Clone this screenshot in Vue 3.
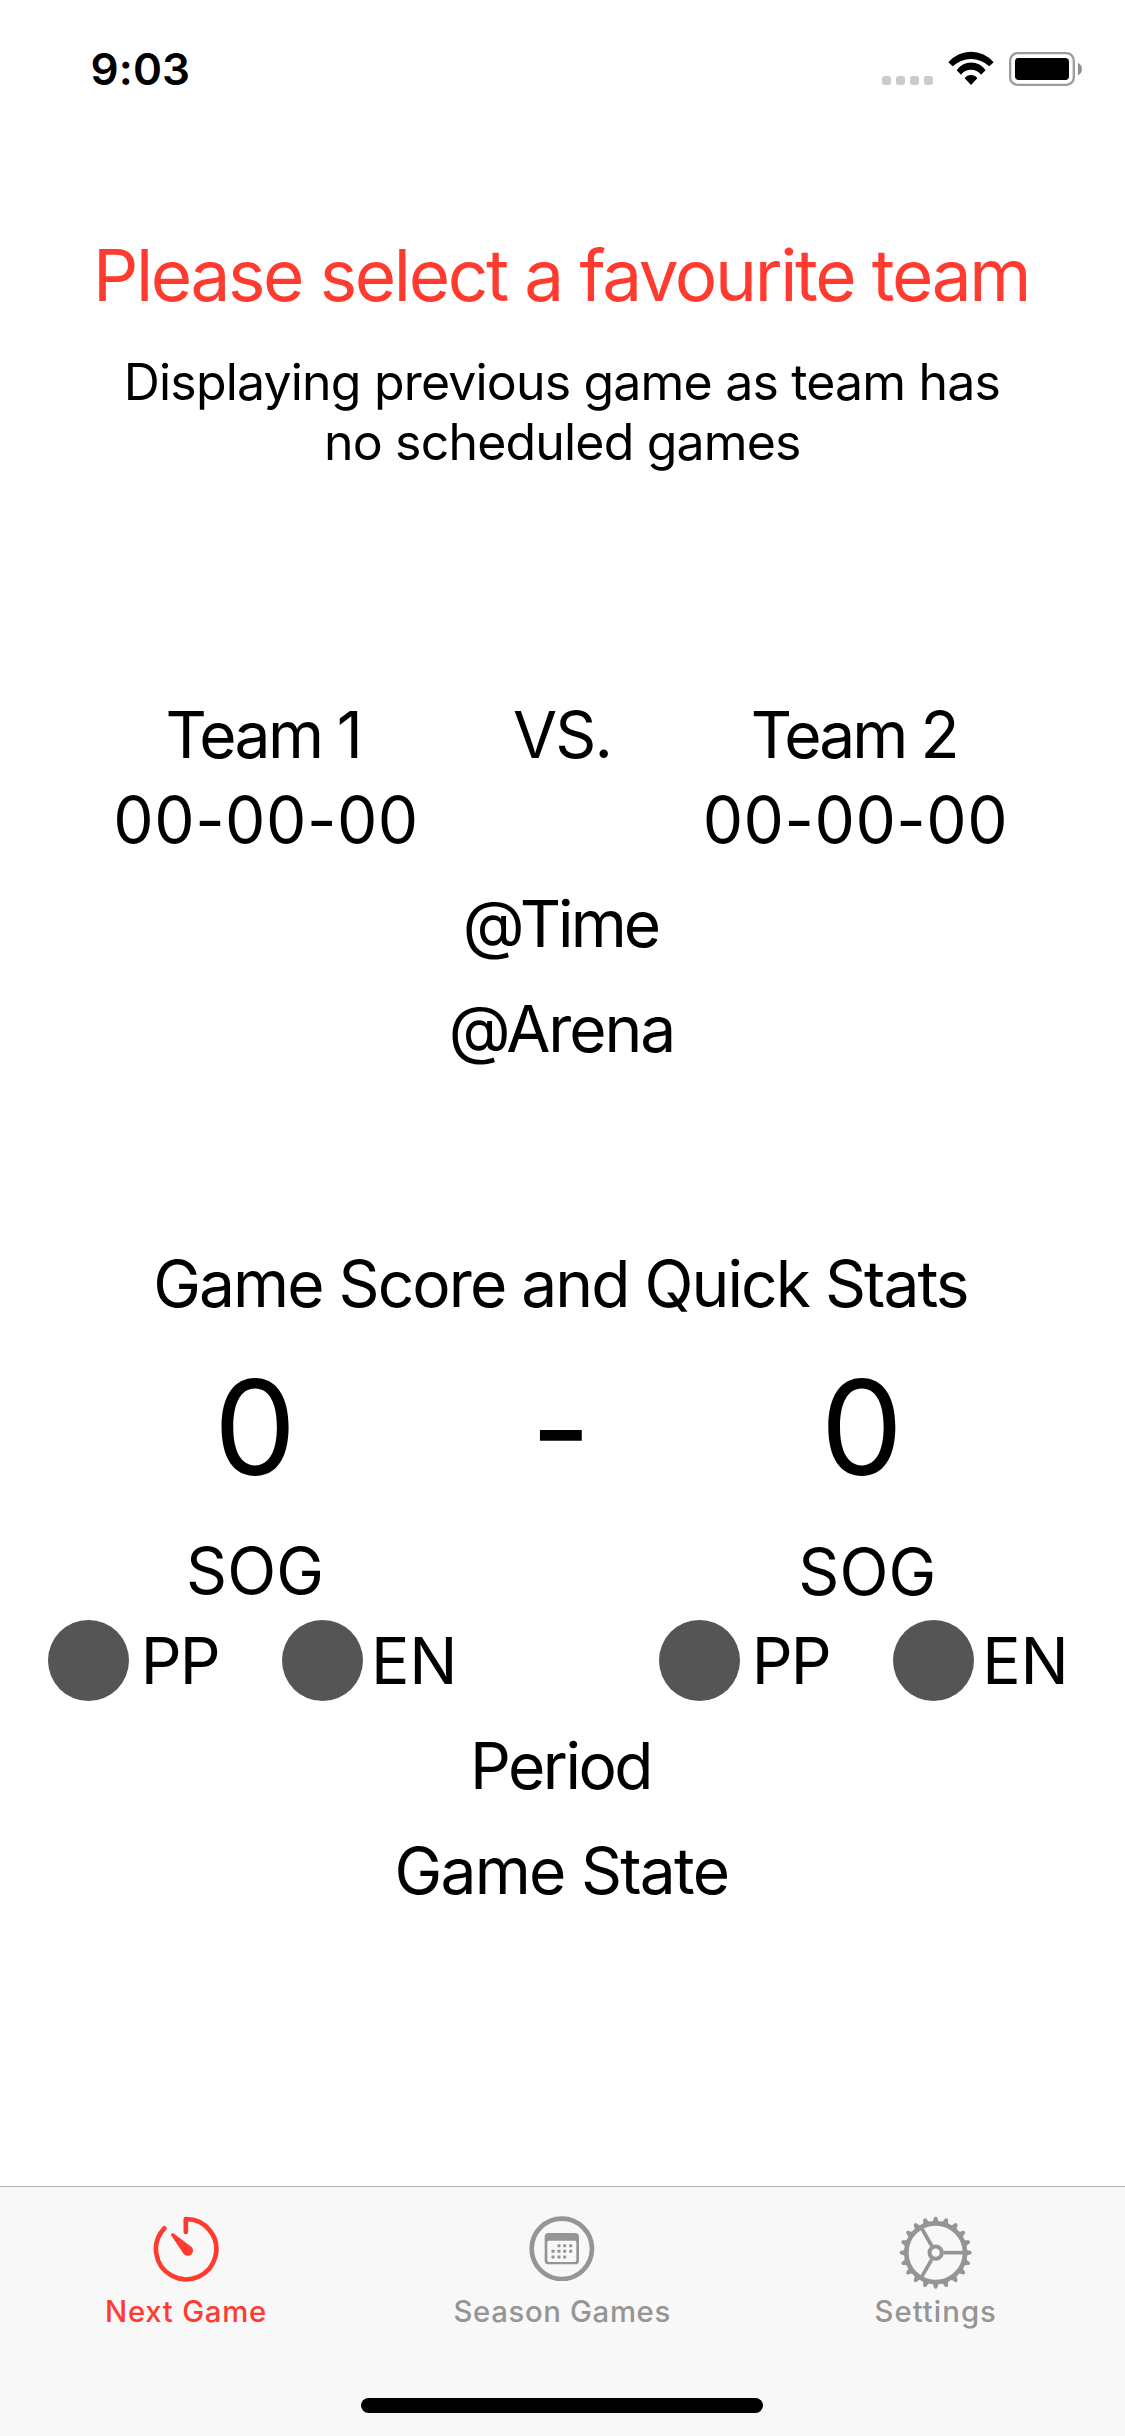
<script setup>
const teeth = Array.from({ length: 20 }, (_, i) => i * 18)
const dots = [
  [90, 89], [107, 89], [125, 89],
  [72, 106], [90, 106], [107, 106], [125, 106],
  [72, 123], [90, 123], [107, 123],
]
</script>

<template>
  <div class="screen">
    <header class="status">
      <span class="time">9:03</span>
      <svg class="status-icons" viewBox="60 60 620 110" width="206.67" height="36.67">
        <g fill="#cbcbcb">
          <rect x="66" y="138" width="27" height="27" rx="8" />
          <rect x="108" y="138" width="27" height="27" rx="8" />
          <rect x="150" y="138" width="27" height="27" rx="8" />
          <rect x="192" y="138" width="27" height="27" rx="8" />
        </g>
        <path d="M265 97A88.5 88.5 0 0 1 401 97L388 109A80 80 0 0 0 278 109Z" />
        <path d="M290 121A52 52 0 0 1 377 121L363 134A38 38 0 0 0 303 134Z" />
        <path d="M314 145A23 23 0 0 1 352 145L333 165Z" />
        <rect x="450.500" y="69.500" width="191" height="95" rx="22" fill="none" stroke="#9b9b9b" stroke-width="7" />
        <rect x="465" y="84" width="162" height="66" rx="11" />
        <path d="M654 98Q666 104 666 117Q666 130 654 136Z" fill="#8e8e8e" />
      </svg>
    </header>

    <main class="content">
      <div class="title">Please select a favourite team</div>
      <div class="notice">
        <div class="notice-first">Displaying previous game as team has</div>
        <div class="notice-second">no scheduled games</div>
      </div>

      <section class="matchup">
        <div class="names">
          <span class="name-one">Team 1</span>
          <span class="versus">VS.</span>
          <span class="name-two">Team 2</span>
        </div>
        <div class="records">
          <span>00-00-00</span>
          <span>00-00-00</span>
        </div>
        <div class="game-time">@Time</div>
        <div class="arena">@Arena</div>
      </section>

      <section class="stats">
        <div class="stats-title">Game Score and Quick Stats</div>
        <div class="scores">
          <span>0</span>
          <span class="dash">-</span>
          <span>0</span>
        </div>
        <div class="shots">
          <span>SOG</span>
          <span class="shots-away">SOG</span>
        </div>
        <div class="indicators">
          <i class="lamp"></i><span class="pp">PP</span>
          <i class="lamp"></i><span class="en">EN</span>
          <i class="lamp"></i><span class="pp">PP</span>
          <i class="lamp"></i><span class="en">EN</span>
        </div>
        <div class="period">Period</div>
        <div class="state">Game State</div>
      </section>
    </main>

    <nav class="tabs">
      <div class="tab active">
        <div class="icon">
          <svg viewBox="0 0 198 198" width="66" height="66">
            <path d="M34 37A90.500 90.500 0 1 0 98.500 9V48" fill="none" stroke="currentColor" stroke-width="14" stroke-linecap="round" stroke-linejoin="round" />
            <path d="M54 57Q53 50 61 52L111 89A16 16 0 1 1 90 111Z" fill="currentColor" />
          </svg>
        </div>
        <span class="label next">Next Game</span>
      </div>
      <div class="tab">
        <div class="icon">
          <svg viewBox="0 0 197 197" width="65.67" height="65.67">
            <circle cx="98.500" cy="98.500" r="90.500" fill="none" stroke="currentColor" stroke-width="14" />
            <path fill="currentColor" fill-rule="evenodd" d="M59 51H138Q150 51 150 63V134Q150 145 138 145H59Q47 145 47 134V63Q47 51 59 51ZM59 74Q55 74 55 78V133Q55 138 60 138H137Q142 138 142 133V78Q142 74 138 74Z" />
            <rect v-for="(d, i) in dots" :key="i" :x="d[0] - 4.5" :y="d[1] - 4.5" width="9" height="9" rx="1" fill="currentColor" />
          </svg>
        </div>
        <span class="label season">Season Games</span>
      </div>
      <div class="tab">
        <div class="icon">
          <svg viewBox="-110 -110 220 220" width="73.33" height="73.33">
            <g fill="none" stroke="currentColor">
              <circle r="88" stroke-width="14" />
              <circle r="18.500" stroke-width="12" />
              <path v-for="a in [0, 120, 240]" :key="a" d="M24 0H83" stroke-width="11" :transform="`rotate(${a})`" />
            </g>
            <path v-for="t in teeth" :key="t" d="M91 -12Q95 -7 105 -5Q108 -4 108 0Q108 4 105 5Q95 7 91 12Z" fill="currentColor" :transform="`rotate(${t})`" />
          </svg>
        </div>
        <span class="label settings">Settings</span>
      </div>
      <div class="home-indicator"></div>
    </nav>
  </div>
</template>

<style>
body {
  margin: 0;
  background: #fff;
}
</style>

<style scoped>
.screen {
  display: flex;
  flex-direction: column;
  width: 1125px;
  height: 2436px;
  overflow: hidden;
  background: #fff;
  color: #000;
  font-family: Inter, "Liberation Sans", sans-serif;
  font-size: 64px;
  line-height: 80px;
  white-space: nowrap;
}

.status {
  display: flex;
  justify-content: space-between;
  align-items: flex-start;
  box-sizing: border-box;
  height: 132px;
  padding: 44px 38.3px 0 90.6px;
}

.time {
  font-size: 44px;
  font-weight: 600;
  line-height: 50px;
  letter-spacing: 0.1px;
}

.status-icons {
  display: block;
  margin-top: 6px;
}

.content {
  flex: 1;
  padding-top: 99px;
}

.title {
  padding-left: 93px;
  color: #ff3b30;
  font-size: 71px;
  line-height: 88px;
  letter-spacing: -2.37px;
}

.notice {
  margin-top: 33px;
  font-size: 50px;
  line-height: 60px;
  letter-spacing: -0.82px;
}

.notice-first {
  padding-left: 123.8px;
}

.notice-second {
  padding-left: 324px;
}

.matchup {
  padding-top: 223px;
}

.names {
  display: grid;
  grid-template-columns: 347.5px 237.8px auto;
  padding-left: 165.5px;
  letter-spacing: -2.6px;
}

.versus {
  letter-spacing: -1.8px;
}

.name-two {
  letter-spacing: -2.9px;
}

.records {
  display: grid;
  grid-template-columns: 589.4px auto;
  margin-top: 5px;
  padding-left: 113.3px;
  letter-spacing: 0.54px;
}

.game-time {
  margin-top: 24px;
  padding-left: 462.7px;
  letter-spacing: -2.9px;
}

.arena {
  margin-top: 25px;
  padding-left: 448.7px;
  letter-spacing: -2.1px;
}

.stats {
  padding-top: 175px;
}

.stats-title {
  padding-left: 153.2px;
  letter-spacing: -1.93px;
}

.scores {
  display: grid;
  grid-template-columns: 316.9px 289.9px auto;
  height: 156px;
  margin-top: 26px;
  padding-left: 213.8px;
  font-size: 131px;
  line-height: 156px;
}

.dash {
  line-height: 158px;
}

.shots {
  display: grid;
  grid-template-columns: 612.2px auto;
  height: 80px;
  margin-top: 25px;
  padding-left: 186px;
  letter-spacing: 0.15px;
}

.shots-away {
  line-height: 82px;
}

.indicators {
  display: grid;
  grid-template-columns: 92.7px 141.3px 89.1px 287.9px 92.7px 141.3px 89.3px auto;
  height: 81px;
  margin-top: 9px;
  padding-left: 48px;
  line-height: 81px;
}

.lamp {
  width: 81px;
  height: 81px;
  border-radius: 50%;
  background: #555;
}

.pp {
  letter-spacing: -1.8px;
}

.en {
  letter-spacing: -0.2px;
}

.period {
  margin-top: 25px;
  padding-left: 470px;
  letter-spacing: -2.5px;
}

.state {
  margin-top: 25px;
  padding-left: 394.4px;
  letter-spacing: -1.7px;
}

.tabs {
  display: grid;
  grid-template-columns: 372px 380.4px 366.6px;
  grid-template-rows: 211px 15px;
  align-content: start;
  justify-items: center;
  box-sizing: border-box;
  height: 250px;
  border-top: 1px solid #b2b2b2;
  background: #f8f8f8;
  color: #959595;
}

.tab {
  display: flex;
  flex-direction: column;
  align-items: center;
  padding-top: 28.5px;
}

.active {
  color: #ff3b30;
}

.icon {
  height: 78px;
}

.icon svg {
  display: block;
}

.label {
  font-size: 29.3px;
  font-weight: 500;
  line-height: 36px;
}

.next {
  letter-spacing: 0.76px;
}

.season {
  letter-spacing: 0.66px;
}

.settings {
  letter-spacing: 1.03px;
}

.home-indicator {
  grid-column: 1 / -1;
  width: 402px;
  height: 15px;
  margin-left: 6px;
  border-radius: 7.5px;
  background: #000;
}
</style>
